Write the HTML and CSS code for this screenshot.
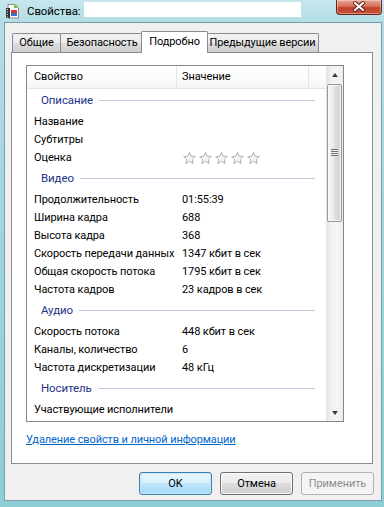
FILE: index.html
```html
<!DOCTYPE html>
<html lang="ru">
<head>
<meta charset="utf-8">
<title>Свойства</title>
<link rel="stylesheet" href="styles.css">
</head>
<body>
<div class="window">
  <div class="titlebar">
    <svg class="appicon" width="16" height="16" viewBox="0 0 16 16">
      <path d="M3 1.5h7l3.5 3.5v10h-10.5z" fill="#fff" stroke="#8a8a8a"/>
      <rect x="1" y="5" width="4" height="10" fill="#333"/>
      <rect x="1.8" y="6" width="1" height="1" fill="#fff"/>
      <rect x="1.8" y="8.5" width="1" height="1" fill="#fff"/>
      <rect x="1.8" y="11" width="1" height="1" fill="#fff"/>
      <rect x="1.8" y="13.5" width="1" height="1" fill="#fff"/>
      <rect x="6" y="7" width="6" height="3" fill="#d8392b"/>
      <rect x="6" y="10" width="6" height="3" fill="#3a6fd0"/>
      <rect x="9" y="2" width="3" height="3" fill="#7fbf3f"/>
    </svg>
    <span class="title">Свойства:</span>
    <span class="filename"></span>
    <div class="close">
      <svg width="46" height="15" viewBox="0 0 46 15">
        <path d="M19 4l8 7M27 4l-8 7" stroke="#5b1d14" stroke-width="4" stroke-linecap="round"/>
        <path d="M19 4l8 7M27 4l-8 7" stroke="#fff" stroke-width="2.2" stroke-linecap="round"/>
      </svg>
    </div>
  </div>
  <div class="client">
    <div class="tabs">
      <div class="tab t1">Общие</div>
      <div class="tab t2">Безопасность</div>
      <div class="tab t3 active">Подробно</div>
      <div class="tab t4">Предыдущие версии</div>
    </div>
    <div class="panel">
      <div class="listbox">
        <div class="list">
          <div class="header">
            <div class="hcol c1">Свойство</div>
            <div class="hcol c2">Значение</div>
            <div class="hcol c3"></div>
          </div>
          <div class="group"><span>Описание</span><i></i></div>
          <div class="row"><span class="k">Название</span><span class="v"></span></div>
          <div class="row"><span class="k">Субтитры</span><span class="v"></span></div>
          <div class="row"><span class="k">Оценка</span><span class="v stars">
            <svg width="82" height="14" viewBox="0 0 82 14">
              <defs><path id="st" d="M6.5 0.8l1.7 3.9 4.1 0.4-3.1 2.8 0.9 4.1-3.6-2.1-3.6 2.1 0.9-4.1-3.1-2.8 4.1-0.4z"/></defs>
              <use href="#st" x="0" y="0.5" fill="#f7f7f7" stroke="#a8a8a8" stroke-width="0.9"/>
              <use href="#st" x="16" y="0.5" fill="#f7f7f7" stroke="#a8a8a8" stroke-width="0.9"/>
              <use href="#st" x="32" y="0.5" fill="#f7f7f7" stroke="#a8a8a8" stroke-width="0.9"/>
              <use href="#st" x="48" y="0.5" fill="#f7f7f7" stroke="#a8a8a8" stroke-width="0.9"/>
              <use href="#st" x="64" y="0.5" fill="#f7f7f7" stroke="#a8a8a8" stroke-width="0.9"/>
            </svg>
          </span></div>
          <div class="group"><span>Видео</span><i></i></div>
          <div class="row"><span class="k">Продолжительность</span><span class="v">01:55:39</span></div>
          <div class="row"><span class="k">Ширина кадра</span><span class="v">688</span></div>
          <div class="row"><span class="k">Высота кадра</span><span class="v">368</span></div>
          <div class="row"><span class="k">Скорость передачи данных</span><span class="v">1347 кбит в сек</span></div>
          <div class="row"><span class="k">Общая скорость потока</span><span class="v">1795 кбит в сек</span></div>
          <div class="row"><span class="k">Частота кадров</span><span class="v">23 кадров в сек</span></div>
          <div class="group"><span>Аудио</span><i></i></div>
          <div class="row"><span class="k">Скорость потока</span><span class="v">448 кбит в сек</span></div>
          <div class="row"><span class="k">Каналы, количество</span><span class="v">6</span></div>
          <div class="row"><span class="k">Частота дискретизации</span><span class="v">48 кГц</span></div>
          <div class="group"><span>Носитель</span><i></i></div>
          <div class="row"><span class="k">Участвующие исполнители</span><span class="v"></span></div>
        </div>
        <div class="scrollbar">
          <div class="sbtn"><span class="arrow up"></span></div>
          <div class="thumb"><span class="grip"></span></div>
          <div class="track"></div>
          <div class="sbtn"><span class="arrow down"></span></div>
        </div>
      </div>
      <a class="link" href="#">Удаление свойств и личной информации</a>
    </div>
    <div class="buttons">
      <button class="btn default">OK</button>
      <button class="btn">Отмена</button>
      <button class="btn disabled">Применить</button>
    </div>
  </div>
</div>
</body>
</html>
```
FILE: styles.css
```css
* { box-sizing: border-box; margin: 0; padding: 0; }
html, body { width: 384px; height: 507px; overflow: hidden; }
body {
  font-family: Roboto, "Noto Sans", sans-serif;
  font-size: 11px;
  letter-spacing: -0.1px;
  color: #000;
  background: #a6d8df;
}
.window {
  width: 384px;
  height: 507px;
  display: flex;
  flex-direction: column;
  padding: 0 2px 6px 4px;
  background: linear-gradient(180deg, #c6e6ec 0px, #b3dde4 22px, #a4d6de 200px, #8ccdd6 507px);
}
.titlebar {
  height: 22px;
  display: flex;
  align-items: flex-start;
  flex-shrink: 0;
}
.appicon { margin: 3px 0 0 1px; flex-shrink: 0; }
.title { margin: 3px 0 0 6px; font-size: 11.5px; line-height: 16px; color: #000; }
.filename {
  margin: 2px 0 0 3px;
  width: 217px;
  height: 15px;
  background: #fff;
}
.close {
  margin-left: auto;
  width: 46px;
  height: 15px;
  border: 1px solid #6a2418;
  border-top: none;
  border-radius: 0 0 4px 4px;
  background: linear-gradient(180deg, #e9a595 0%, #d6705c 45%, #c2412a 55%, #c8543c 100%);
  box-shadow: inset 0 0 0 1px rgba(255,255,255,0.35);
  overflow: hidden;
}
.close svg { display: block; margin: -1px 0 0 -1px; }
.client {
  flex: 1;
  background: #f0f0f0;
  border: 1px solid #7a9ea8;
  display: flex;
  flex-direction: column;
  padding: 8px 7px 0 6px;
}
.tabs {
  display: flex;
  height: 21px;
  margin-left: 1px;
  align-items: flex-end;
  position: relative;
  z-index: 1;
}
.tab {
  height: 19px;
  border: 1px solid #898c95;
  border-bottom: none;
  border-radius: 2px 2px 0 0;
  background: linear-gradient(180deg, #f2f2f2 0%, #ebebeb 50%, #dddddd 50%, #cfcfcf 100%);
  text-align: center;
  line-height: 17px;
  margin-right: -1px;
  white-space: nowrap;
}
.t1 { width: 49px; }
.t2 { width: 84px; }
.t4 { width: 113px; }
.tab.active {
  height: 22px;
  width: 67px;
  margin: 0 -2px 0 -2px;
  background: #fff;
  line-height: 19px;
  position: relative;
  z-index: 2;
  margin-bottom: -1px;
}
.panel {
  height: 412px;
  width: 362px;
  border: 1px solid #898c95;
  background: #fff;
  padding: 12px 0 0 14px;
  display: flex;
  flex-direction: column;
  align-items: flex-start;
}
.listbox {
  width: 318px;
  height: 357px;
  border: 1px solid #828790;
  display: flex;
  background: #fff;
}
.list { flex: 1; overflow: hidden; }
.header {
  display: flex;
  height: 23px;
  border-bottom: 1px solid #e2e4e8;
  background: linear-gradient(180deg, #ffffff 0%, #fbfbfb 60%, #f4f5f7 100%);
  line-height: 22px;
}
.hcol { white-space: nowrap; }
.c1 { width: 150px; padding-left: 7px; border-right: 1px solid #e2e4e8; }
.c2 { width: 132px; padding-left: 5px; border-right: 1px solid #e2e4e8; }
.c3 { flex: 1; }
.group {
  height: 24px;
  display: flex;
  align-items: center;
  padding: 0 11px 2px 14px;
}
.group span { color: #1e3287; font-size: 11.5px; }
.group i {
  flex: 1;
  height: 1px;
  margin-left: 6px;
  background: #bfcbdc;
}
.row {
  height: 18px;
  line-height: 18px;
  display: flex;
  white-space: nowrap;
}
.k { width: 155px; padding-left: 7px; flex-shrink: 0; }
.v { flex: 1; }
.stars { display: flex; align-items: center; padding-left: 1px; }
.stars svg { display: block; }
.scrollbar {
  width: 17px;
  display: flex;
  flex-direction: column;
  background: linear-gradient(90deg, #e3e3e3 0%, #f0f0f0 20%, #f5f5f5 60%, #ededed 100%);
  border-left: 1px solid #e6e6e6;
}
.sbtn {
  height: 17px;
  display: flex;
  align-items: center;
  justify-content: center;
}
.arrow { width: 0; height: 0; border-left: 3.5px solid transparent; border-right: 3.5px solid transparent; }
.arrow.up { border-bottom: 4px solid #3a3a3a; }
.arrow.down { border-top: 4px solid #3a3a3a; }
.thumb {
  height: 138px;
  margin: 1px 1px 0 0;
  border: 1px solid #989898;
  border-radius: 2px;
  background: linear-gradient(90deg, #f6f6f6 0%, #eaeaea 45%, #dcdcdc 55%, #d2d2d2 100%);
  box-shadow: inset 0 0 0 1px rgba(255,255,255,0.7);
  display: flex;
  align-items: center;
  justify-content: center;
}
.grip {
  width: 7px;
  height: 7px;
  background: repeating-linear-gradient(180deg, #6b6b6b 0, #6b6b6b 1px, #f4f4f4 1px, #f4f4f4 2px);
  margin-top: -2px;
}
.track { flex: 1; }
.link {
  margin-top: 10px;
  font-size: 11px;
  line-height: 16px;
  color: #0066cc;
  text-decoration: underline;
}
.buttons {
  display: flex;
  justify-content: flex-end;
  gap: 8px;
  margin-top: 8px;
  padding-right: 0;
}
.btn {
  width: 73px;
  height: 23px;
  font-family: Roboto, "Noto Sans", sans-serif;
  font-size: 11px;
  letter-spacing: -0.1px;
  color: #000;
  border: 1px solid #707070;
  border-radius: 3px;
  background: linear-gradient(180deg, #f2f2f2 0%, #ebebeb 50%, #dddddd 50%, #cfcfcf 100%);
  box-shadow: inset 0 0 0 1px rgba(255,255,255,0.8);
}
.btn.default {
  border-color: #3c7fb1;
  background: linear-gradient(180deg, #eaf6fd 0%, #d9f0fc 50%, #bee6fd 50%, #a7d9f5 100%);
  box-shadow: inset 0 0 0 1px #c9e6f7;
}
.btn.disabled {
  color: #8d8d8d;
  border-color: #adb2b5;
  background: #f4f4f4;
  box-shadow: none;
}
```
